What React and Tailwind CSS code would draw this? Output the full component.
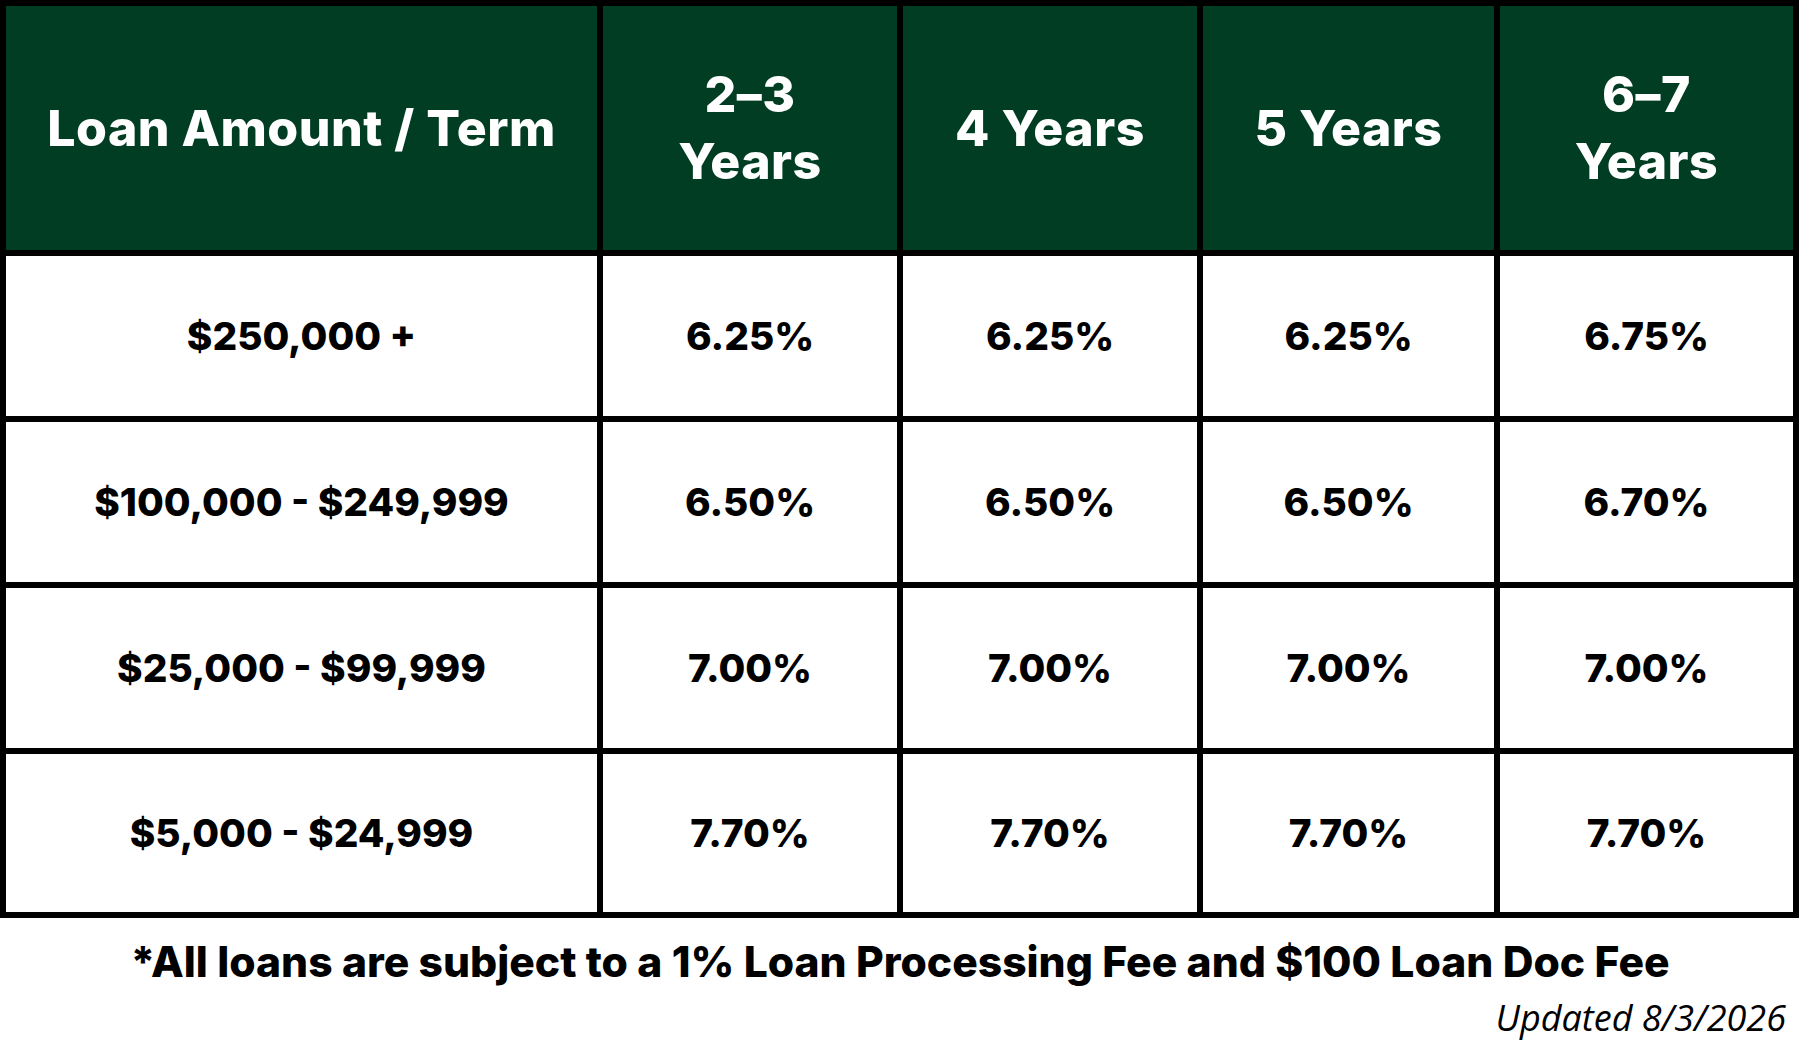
import React from "react";

const rows = [
  ["$250,000 +", "6.25%", "6.25%", "6.25%", "6.75%"],
  ["$100,000 - $249,999", "6.50%", "6.50%", "6.50%", "6.70%"],
  ["$25,000 - $99,999", "7.00%", "7.00%", "7.00%", "7.00%"],
  ["$5,000 - $24,999", "7.70%", "7.70%", "7.70%", "7.70%"],
];

const head = "bg-[#013d23] flex items-center justify-center text-white font-extrabold text-[50px] leading-[67px] tracking-[0.01em] text-center";

export default function App() {
  return (
    <div className="w-[1800px] h-[1050px] bg-white font-['Inter',sans-serif]">
      <div className="w-[1799px] bg-black p-[6px] grid gap-[6px] grid-cols-[591px_294px_294px_291px_293px] grid-rows-[244px_160px_160px_160px_158px]">
        <div className={head}>Loan Amount / Term</div>
        <div className={head}>
          <span>2–3<br />Years</span>
        </div>
        <div className={head}>4 Years</div>
        <div className={head}>5 Years</div>
        <div className={head}>
          <span>6–7<br />Years</span>
        </div>
        {rows.map((r, i) =>
          r.map((c, j) => (
            <div
              key={i + "-" + j}
              className="bg-white flex items-center justify-center text-black font-extrabold text-[38.8px] text-center"
            >
              {c}
            </div>
          ))
        )}
      </div>
      <div className="w-[1800px] flex justify-center pt-[19px] text-black font-extrabold text-[42.6px] leading-[50px]">
        *All loans are subject to a 1% Loan Processing Fee and $100 Loan Doc Fee
      </div>
      <div className="w-[1786px] flex justify-end pt-[9px] text-black italic text-[36px] leading-[44px] font-['Open_Sans',sans-serif]">
        Updated 8/3/2026
      </div>
    </div>
  );
}
